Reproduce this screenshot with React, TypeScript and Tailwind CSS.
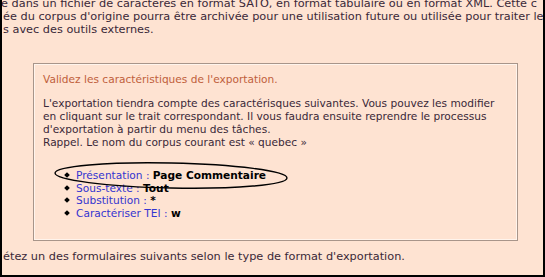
const font = { fontFamily: '"DejaVu Sans", Verdana, sans-serif' }

const items = [
  { label: 'Présentation', value: 'Page Commentaire' },
  { label: 'Sous-texte', value: 'Tout' },
  { label: 'Substitution', value: '*' },
  { label: 'Caractériser TEI', value: 'w' },
]

export default function App() {
  return (
    <div
      className="relative w-[545px] h-[277px] overflow-hidden bg-[#fee3d2] border-l-2 border-r-2 border-b-2 border-black text-[10.6px] leading-[13px] text-[#3a2838]"
      style={font}
    >
      {/* intro text, cropped at the top */}
      <div className="-mt-[3px] whitespace-nowrap text-[11.3px]">
        <div className="-ml-[1px]">e dans un fichier de caractères en format SATO, en format tabulaire ou en format XML. Cette c</div>
        <div className="ml-[1px]">ée du corpus d'origine pourra être archivée pour une utilisation future ou utilisée pour traiter le</div>
        <div className="ml-[1px]">s avec des outils externes.</div>
      </div>

      {/* validation panel */}
      <div className="ml-[31px] mt-[27px] w-[485px] border border-[#a8958a]">
        <div className="border border-[#fff4ec] pl-[8px] pr-2 pt-[8px] pb-[20px]">
          <div className="text-[#c0603c]">Validez les caractéristiques de l'exportation.</div>
          <div className="mt-[11px] whitespace-nowrap">
            L'exportation tiendra compte des caractérisques suivantes. Vous pouvez les modifier
            <br />
            en cliquant sur le trait correspondant. Il vous faudra ensuite reprendre le processus
            <br />
            d'exportation à partir du menu des tâches.
            <br />
            Rappel. Le nom du corpus courant est « quebec »
          </div>
          <ul className="mt-[20px] ml-[22px] leading-[12.5px]">
            {items.map((it) => (
              <li key={it.label} className="flex items-center">
                <span className="w-[4px] h-[4px] bg-black rotate-45 mr-[7px]" />
                <span className="text-[#3434d0]">{it.label}</span>
                <span className="text-[#3434d0]">&nbsp;:&nbsp;</span>
                <span className="font-bold text-black">{it.value}</span>
              </li>
            ))}
          </ul>
        </div>
      </div>

      <div className="mt-[9px] ml-[1px] whitespace-nowrap text-[11.3px]">
        étez un des formulaires suivants selon le type de format d'exportation.
      </div>

      {/* hand-drawn highlight around the first item */}
      <svg className="absolute left-0 top-0 pointer-events-none" width="545" height="277">
        <ellipse
          cx="169"
          cy="175.5"
          rx="116"
          ry="12.5"
          transform="rotate(1.2 169 175.5)"
          fill="none"
          stroke="#000"
          strokeWidth="1.4"
        />
      </svg>
    </div>
  )
}
